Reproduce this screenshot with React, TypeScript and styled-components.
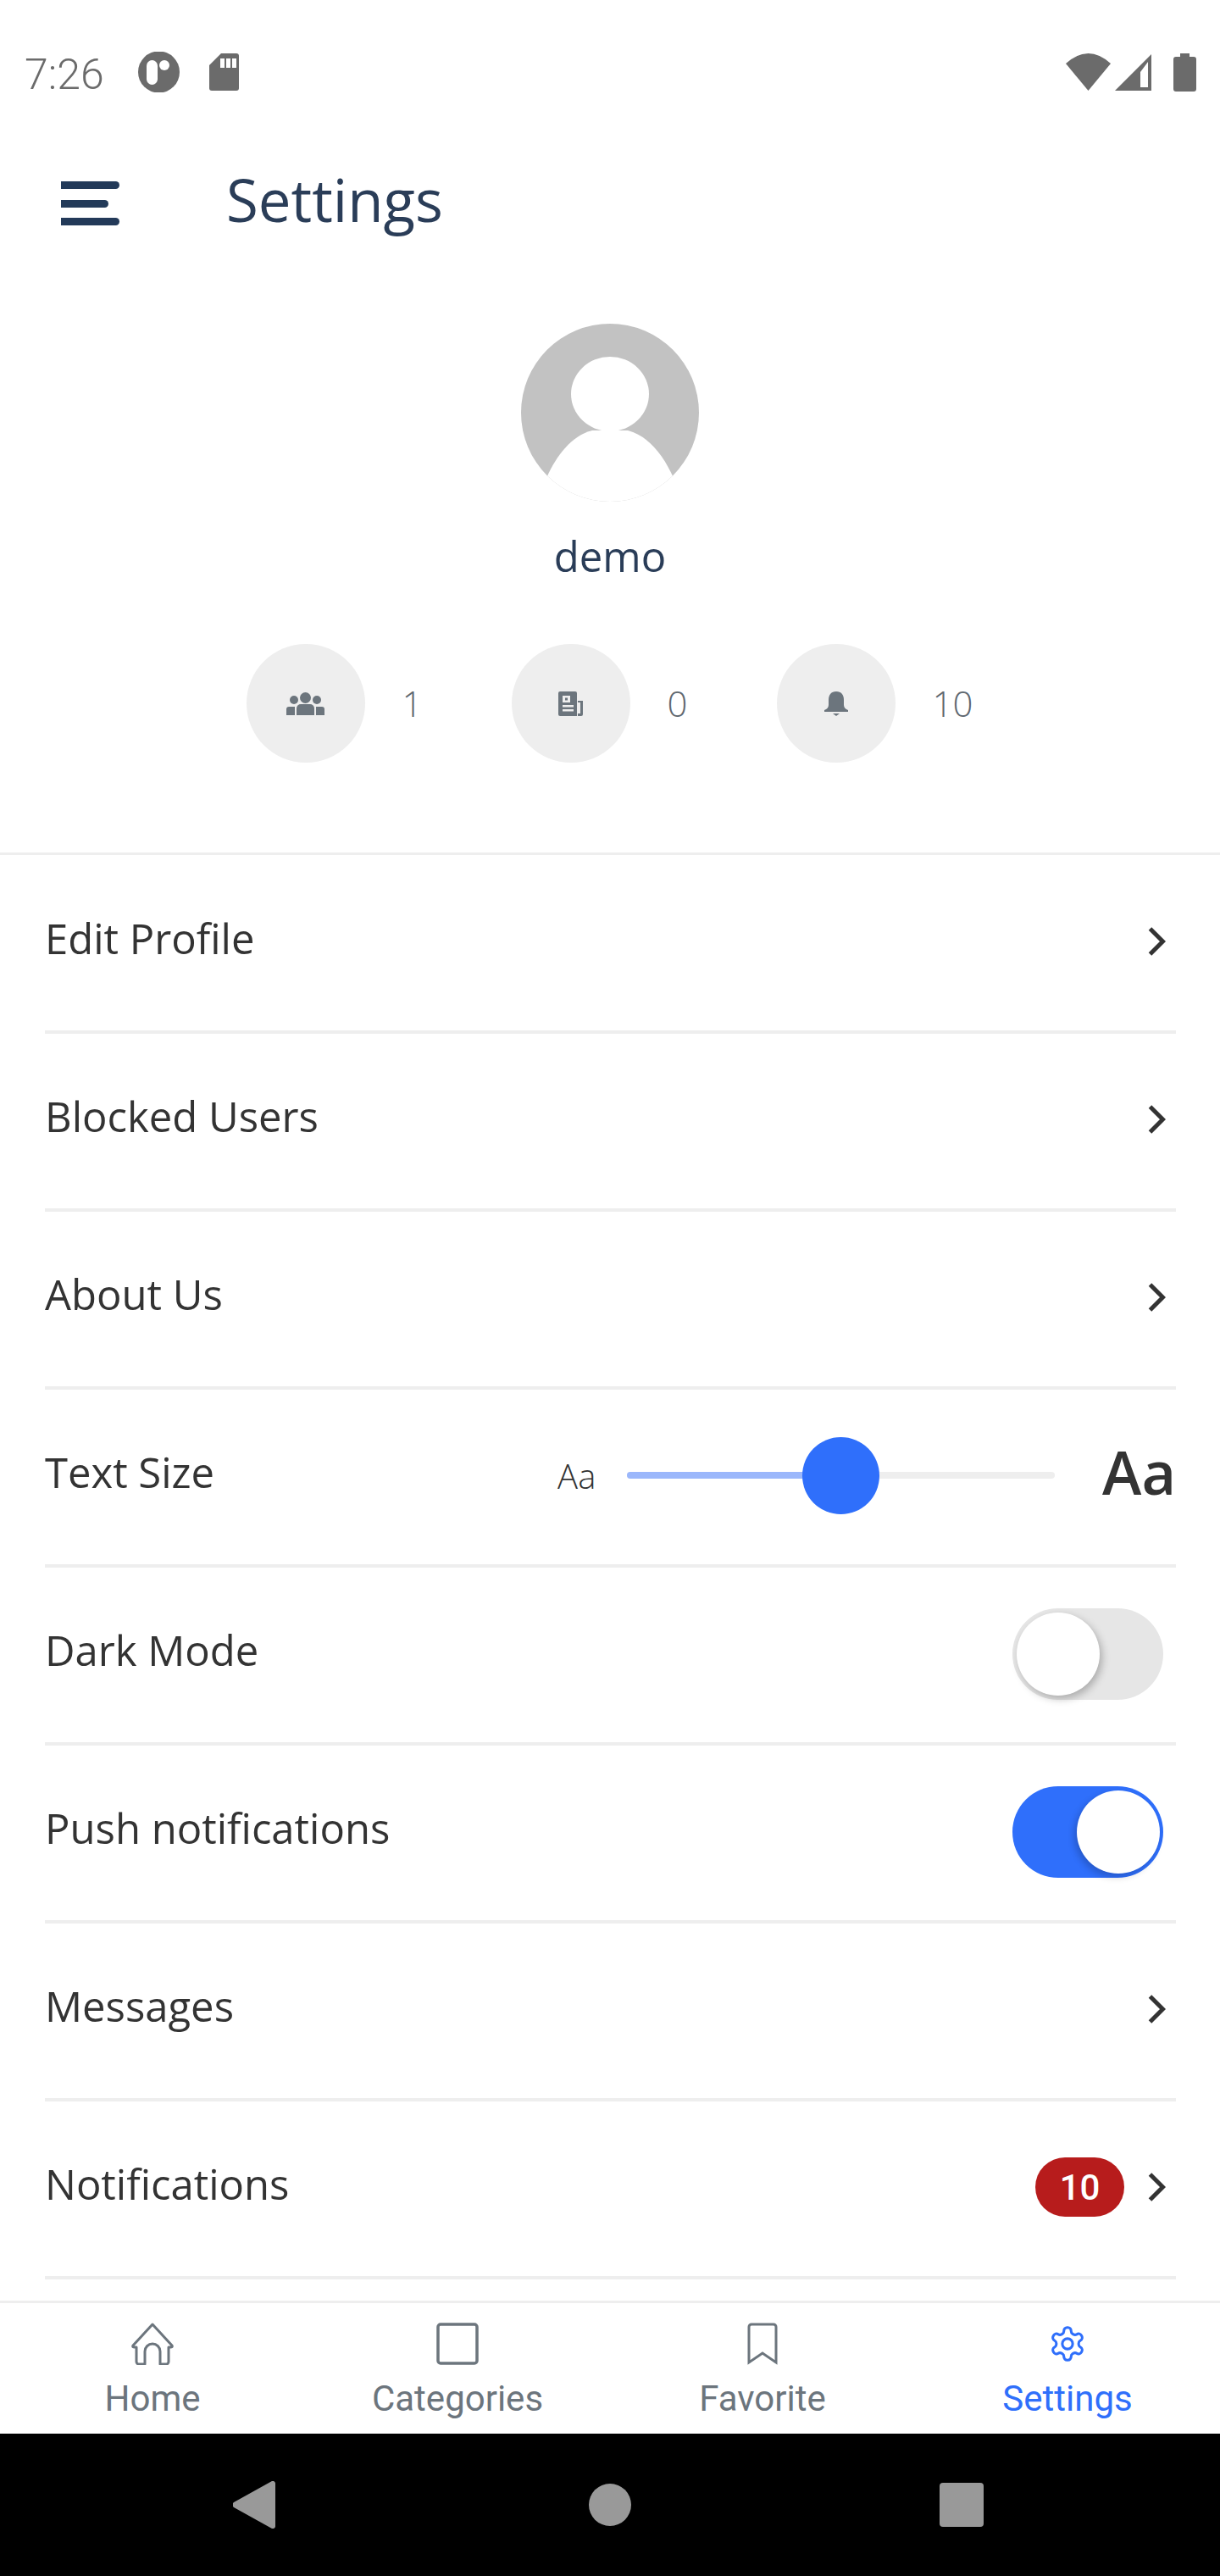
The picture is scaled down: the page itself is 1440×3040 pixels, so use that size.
import styled, { createGlobalStyle } from "styled-components";

const GlobalStyle = createGlobalStyle`
  html, body {
    margin: 0;
    padding: 0;
    background: #fff;
  }
  * {
    box-sizing: border-box;
  }
`;

const Screen = styled.div`
  width: 1440px;
  height: 3040px;
  display: flex;
  flex-direction: column;
  overflow: hidden;
  background: #fff;
  font-family: "Open Sans", sans-serif;
`;

const StatusBar = styled.div`
  height: 170px;
  flex: none;
  display: flex;
  align-items: center;
  padding: 0 28px 0 29px;
  color: #6b6b6b;
`;

const Clock = styled.span`
  font-family: Roboto, sans-serif;
  font-size: 50px;
  font-weight: 300;
  width: 99px;
  margin-top: 5px;
`;

const StatusLeft = styled.div`
  display: flex;
  align-items: center;
  gap: 35px;
  flex: 1;
`;

const StatusRight = styled.div`
  display: flex;
  align-items: center;
  gap: 5px;
`;

const BatteryIcon = styled.svg`
  margin-left: 21px;
`;

const Header = styled.header`
  height: 96px;
  flex: none;
  margin-top: 17px;
  display: flex;
  align-items: center;
  padding-left: 72px;
  gap: 126px;
`;

const MenuIcon = styled.div`
  width: 69px;
  height: 52px;
  margin-top: 10px;
  display: flex;
  flex-direction: column;
  justify-content: space-between;
`;

const MenuBar = styled.span<{ $short?: boolean }>`
  display: block;
  height: 9px;
  width: ${(p) => (p.$short ? "56px" : "69px")};
  background: #233a59;
  border-radius: 0 5px 5px 0;
`;

const Title = styled.h1`
  margin: 0;
  font-size: 69px;
  font-weight: 400;
  color: #2a3d58;
  line-height: 96px;
`;

const Profile = styled.section`
  flex: none;
  height: 726px;
  padding-top: 99px;
  display: flex;
  flex-direction: column;
  align-items: center;
  border-bottom: 3px solid #eeeeee;
`;

const Avatar = styled.div`
  width: 210px;
  height: 210px;
  flex: none;
`;

const Name = styled.div`
  margin-top: 32px;
  font-size: 49px;
  line-height: 64px;
  color: #2a3d58;
`;

const Stats = styled.div`
  margin-top: 72px;
  width: 860px;
  display: grid;
  grid-template-columns: repeat(3, 313px);
  margin-left: 1px;
`;

const Stat = styled.div`
  display: flex;
  align-items: center;
  gap: 44px;
`;

const StatCircle = styled.div`
  width: 140px;
  height: 140px;
  border-radius: 50%;
  background: #eeeeee;
  display: flex;
  align-items: center;
  justify-content: center;
`;

const StatValue = styled.span`
  font-size: 42px;
  font-weight: 300;
  color: #5f6870;
  margin-bottom: 2px;
`;

const List = styled.div`
  flex: 1;
  min-height: 0;
  padding: 1px 52px 0 53px;
  overflow: hidden;
`;

const Row = styled.div`
  height: 210px;
  display: flex;
  align-items: center;
  justify-content: space-between;
  border-bottom: 4px solid #eeeeee;
  padding-bottom: 4px;
`;

const RowLabel = styled.span`
  font-size: 49px;
  color: #333;
  margin-bottom: 8px;
`;

const RowEnd = styled.div`
  display: flex;
  align-items: center;
  gap: 28px;
  padding-right: 12px;
`;

const Badge = styled.span`
  width: 105px;
  height: 70px;
  border-radius: 35px;
  background: #b71c1c;
  color: #fff;
  font-family: Roboto, sans-serif;
  font-size: 42px;
  font-weight: 500;
  display: flex;
  align-items: center;
  justify-content: center;
`;

const SliderWrap = styled.div`
  display: flex;
  align-items: center;
`;

const SmallAa = styled.span`
  font-size: 40px;
  font-weight: 300;
  color: #333;
  width: 82px;
`;

const LargeAa = styled.span`
  font-size: 70px;
  font-weight: 600;
  color: #333;
  margin-left: 56px;
  margin-bottom: 8px;
`;

const Track = styled.div`
  position: relative;
  width: 505px;
  height: 8px;
  border-radius: 4px;
  background: #eeeeee;
`;

const TrackFill = styled.div`
  width: 250px;
  height: 8px;
  border-radius: 4px 0 0 4px;
  background: #9bb7fb;
`;

const Thumb = styled.div`
  position: absolute;
  left: 207px;
  top: -41px;
  width: 91px;
  height: 91px;
  border-radius: 50%;
  background: #2f6ffb;
`;

const Switch = styled.div<{ $on?: boolean }>`
  position: relative;
  width: 178px;
  height: 108px;
  border-radius: 54px;
  margin-right: 15px;
  margin-top: 2px;
  background: ${(p) => (p.$on ? "#2f6ffb" : "#e6e6e6")};
`;

const Knob = styled.div<{ $on?: boolean }>`
  position: absolute;
  top: 5px;
  left: ${(p) => (p.$on ? "76px" : "5px")};
  width: 98px;
  height: 98px;
  border-radius: 50%;
  background: #fff;
  box-shadow: ${(p) =>
    p.$on ? "-3px 4px 8px rgba(0, 0, 0, 0.2)" : "3px 4px 10px rgba(0, 0, 0, 0.25)"};
`;

const BottomNav = styled.nav`
  height: 157px;
  flex: none;
  display: grid;
  grid-template-columns: repeat(4, 360px);
  border-top: 3px solid #eeeeee;
  background: #fff;
`;

const Tab = styled.div<{ $active?: boolean }>`
  display: flex;
  flex-direction: column;
  align-items: center;
  padding-top: 23px;
  color: ${(p) => (p.$active ? "#2f6ffb" : "#6c757d")};
`;

const TabIcon = styled.div`
  height: 50px;
  display: flex;
  align-items: center;
  justify-content: center;
`;

const TabLabel = styled.span`
  margin-top: 15px;
  font-family: Roboto, sans-serif;
  font-size: 42px;
  line-height: 50px;
`;

const SystemNav = styled.div`
  height: 168px;
  flex: none;
  background: #000;
  display: grid;
  grid-template-columns: 420px 414px 52px;
  padding-left: 275px;
  align-items: center;
`;

const SystemButton = styled.div`
  display: flex;
`;

const Chevron = () => (
  <svg width="21" height="34" viewBox="0 0 21 34" fill="none">
    <path d="M2.5 2 L17.5 17 L2.5 32" stroke="#333" strokeWidth="5" />
  </svg>
);

const rows = ["Edit Profile", "Blocked Users", "About Us"];

const App = () => {
  return (
    <Screen>
      <GlobalStyle />
      <StatusBar>
        <StatusLeft>
          <Clock>7:26</Clock>
          <svg width="49" height="48" viewBox="0 0 49 48">
            <circle cx="24.5" cy="24" r="24.5" fill="#6b6b6b" />
            <rect x="10" y="10" width="13" height="29" rx="6.5" fill="#fff" />
            <circle cx="31" cy="16" r="6" fill="#fff" />
          </svg>
          <svg width="35" height="44" viewBox="0 0 35 44">
            <path
              d="M14 0H32a3 3 0 0 1 3 3V41a3 3 0 0 1-3 3H3a3 3 0 0 1-3-3V14Z"
              fill="#6b6b6b"
            />
            <rect x="13" y="6" width="5" height="11" fill="#fff" />
            <rect x="20" y="6" width="5" height="11" fill="#fff" />
            <rect x="27" y="6" width="5" height="11" fill="#fff" />
          </svg>
        </StatusLeft>
        <StatusRight>
          <svg width="53" height="44" viewBox="0 0 53 44">
            <path d="M0 12Q26.5 -12 53 12L26.5 44Z" fill="#6b6b6b" />
          </svg>
          <svg width="43" height="43" viewBox="0 0 43 43">
            <path d="M0 43L43 0V43Z" fill="#6b6b6b" />
            <path d="M30 39V21L39 9V39Z" fill="#fff" />
          </svg>
          <BatteryIcon width="27" height="45" viewBox="0 0 27 45">
            <path
              d="M8 0H19V4H24a3 3 0 0 1 3 3V42a3 3 0 0 1-3 3H3a3 3 0 0 1-3-3V7a3 3 0 0 1 3-3H8Z"
              fill="#6b6b6b"
            />
          </BatteryIcon>
        </StatusRight>
      </StatusBar>
      <Header>
        <MenuIcon>
          <MenuBar />
          <MenuBar $short />
          <MenuBar />
        </MenuIcon>
        <Title>Settings</Title>
      </Header>
      <Profile>
        <Avatar>
          <svg width="210" height="210" viewBox="0 0 210 210">
            <defs>
              <clipPath id="avatar-clip">
                <circle cx="105" cy="105" r="105" />
              </clipPath>
            </defs>
            <circle cx="105" cy="105" r="105" fill="#c2c2c2" />
            <g clipPath="url(#avatar-clip)" fill="#fff">
              <ellipse cx="105" cy="83" rx="46" ry="44" />
              <path d="M84 126C60 132 42 155 30 182V210H180V182C168 155 150 132 126 126Z" />
            </g>
          </svg>
        </Avatar>
        <Name>demo</Name>
        <Stats>
          <Stat>
            <StatCircle>
              <svg width="45" height="27" viewBox="0 0 45 27" fill="#6c757d">
                <circle cx="22.5" cy="6.5" r="6.5" />
                <circle cx="9" cy="9" r="5" />
                <circle cx="36" cy="9" r="5" />
                <path d="M12 27V19a5 5 0 0 1 5-5H28a5 5 0 0 1 5 5V27Z" />
                <path d="M0 27V20a3 3 0 0 1 3-3H10V27Z" />
                <path d="M35 27V17H42a3 3 0 0 1 3 3V27Z" />
              </svg>
            </StatCircle>
            <StatValue>1</StatValue>
          </Stat>
          <Stat>
            <StatCircle>
              <svg width="29" height="29" viewBox="0 0 29 29" fill="#6c757d">
                <path d="M2 0H20a2 2 0 0 1 2 2V29H2a2 2 0 0 1-2-2V2a2 2 0 0 1 2-2Z" />
                <rect x="5" y="5" width="9" height="8" fill="#eee" />
                <rect x="8" y="7.5" width="3" height="3" fill="#6c757d" />
                <rect x="5" y="16" width="13" height="2.5" fill="#eee" />
                <rect x="5" y="21" width="13" height="2.5" fill="#eee" />
                <path d="M23 11H29V27a2 2 0 0 1-2 2H23V26H26V13H23Z" />
              </svg>
            </StatCircle>
            <StatValue>0</StatValue>
          </Stat>
          <Stat>
            <StatCircle>
              <svg width="28" height="29" viewBox="0 0 28 29" fill="#6c757d">
                <path d="M14 0C20 0 23 4 23 10V16C23 19 25 21 28 22V24H0V22C3 21 5 19 5 16V10C5 4 8 0 14 0Z" />
                <path d="M10 26H18L14 29Z" />
              </svg>
            </StatCircle>
            <StatValue>10</StatValue>
          </Stat>
        </Stats>
      </Profile>
      <List>
        {rows.map((label) => (
          <Row key={label}>
            <RowLabel>{label}</RowLabel>
            <RowEnd>
              <Chevron />
            </RowEnd>
          </Row>
        ))}
        <Row>
          <RowLabel>Text Size</RowLabel>
          <SliderWrap>
            <SmallAa>Aa</SmallAa>
            <Track>
              <TrackFill />
              <Thumb />
            </Track>
            <LargeAa>Aa</LargeAa>
          </SliderWrap>
        </Row>
        <Row>
          <RowLabel>Dark Mode</RowLabel>
          <Switch>
            <Knob />
          </Switch>
        </Row>
        <Row>
          <RowLabel>Push notifications</RowLabel>
          <Switch $on>
            <Knob $on />
          </Switch>
        </Row>
        <Row>
          <RowLabel>Messages</RowLabel>
          <RowEnd>
            <Chevron />
          </RowEnd>
        </Row>
        <Row>
          <RowLabel>Notifications</RowLabel>
          <RowEnd>
            <Badge>10</Badge>
            <Chevron />
          </RowEnd>
        </Row>
      </List>
      <BottomNav>
        <Tab>
          <TabIcon>
            <svg width="50" height="50" viewBox="0 0 50 50" fill="none" stroke="#6c757d" strokeWidth="3" strokeLinejoin="round">
              <path d="M25 2L48 27C49 29 47 29 44 29V46a3 3 0 0 1-3 3H34V34a9 9 0 0 0-18 0V49H9a3 3 0 0 1-3-3V29C3 29 1 29 2 27Z" />
            </svg>
          </TabIcon>
          <TabLabel>Home</TabLabel>
        </Tab>
        <Tab>
          <TabIcon>
            <svg width="50" height="50" viewBox="0 0 50 50" fill="none" stroke="#6c757d" strokeWidth="3.5">
              <rect x="2" y="2" width="46" height="46" rx="3" />
            </svg>
          </TabIcon>
          <TabLabel>Categories</TabLabel>
        </Tab>
        <Tab>
          <TabIcon>
            <svg width="36" height="50" viewBox="0 0 36 50" fill="none" stroke="#6c757d" strokeWidth="3">
              <path d="M2 47V5a3 3 0 0 1 3-3H31a3 3 0 0 1 3 3V47L18 36Z" />
            </svg>
          </TabIcon>
          <TabLabel>Favorite</TabLabel>
        </Tab>
        <Tab $active>
          <TabIcon>
            <svg width="46" height="48" viewBox="0 0 24 24" fill="none" stroke="#2f6ffb" strokeWidth="1.6" strokeLinecap="round" strokeLinejoin="round">
              <path d="M12.22 2h-.44a2 2 0 0 0-2 2v.18a2 2 0 0 1-1 1.73l-.43.25a2 2 0 0 1-2 0l-.15-.08a2 2 0 0 0-2.73.73l-.22.38a2 2 0 0 0 .73 2.73l.15.1a2 2 0 0 1 1 1.72v.51a2 2 0 0 1-1 1.74l-.15.09a2 2 0 0 0-.73 2.73l.22.38a2 2 0 0 0 2.73.73l.15-.08a2 2 0 0 1 2 0l.43.25a2 2 0 0 1 1 1.73V20a2 2 0 0 0 2 2h.44a2 2 0 0 0 2-2v-.18a2 2 0 0 1 1-1.73l.43-.25a2 2 0 0 1 2 0l.15.08a2 2 0 0 0 2.73-.73l.22-.39a2 2 0 0 0-.73-2.73l-.15-.08a2 2 0 0 1-1-1.74v-.5a2 2 0 0 1 1-1.74l.15-.09a2 2 0 0 0 .73-2.73l-.22-.38a2 2 0 0 0-2.73-.73l-.15.08a2 2 0 0 1-2 0l-.43-.25a2 2 0 0 1-1-1.73V4a2 2 0 0 0-2-2z" />
              <circle cx="12" cy="12" r="3.2" />
            </svg>
          </TabIcon>
          <TabLabel>Settings</TabLabel>
        </Tab>
      </BottomNav>
      <SystemNav>
        <SystemButton>
          <svg width="50" height="56" viewBox="0 0 50 56">
            <path d="M46 0a3 3 0 0 1 4 3V53a3 3 0 0 1-4 3L1 31a4 4 0 0 1 0-6Z" fill="#999" />
          </svg>
        </SystemButton>
        <SystemButton>
          <svg width="50" height="50" viewBox="0 0 50 50">
            <circle cx="25" cy="25" r="25" fill="#999" />
          </svg>
        </SystemButton>
        <SystemButton>
          <svg width="52" height="52" viewBox="0 0 52 52">
            <rect width="52" height="52" rx="4" fill="#999" />
          </svg>
        </SystemButton>
      </SystemNav>
    </Screen>
  );
};

export default App;
